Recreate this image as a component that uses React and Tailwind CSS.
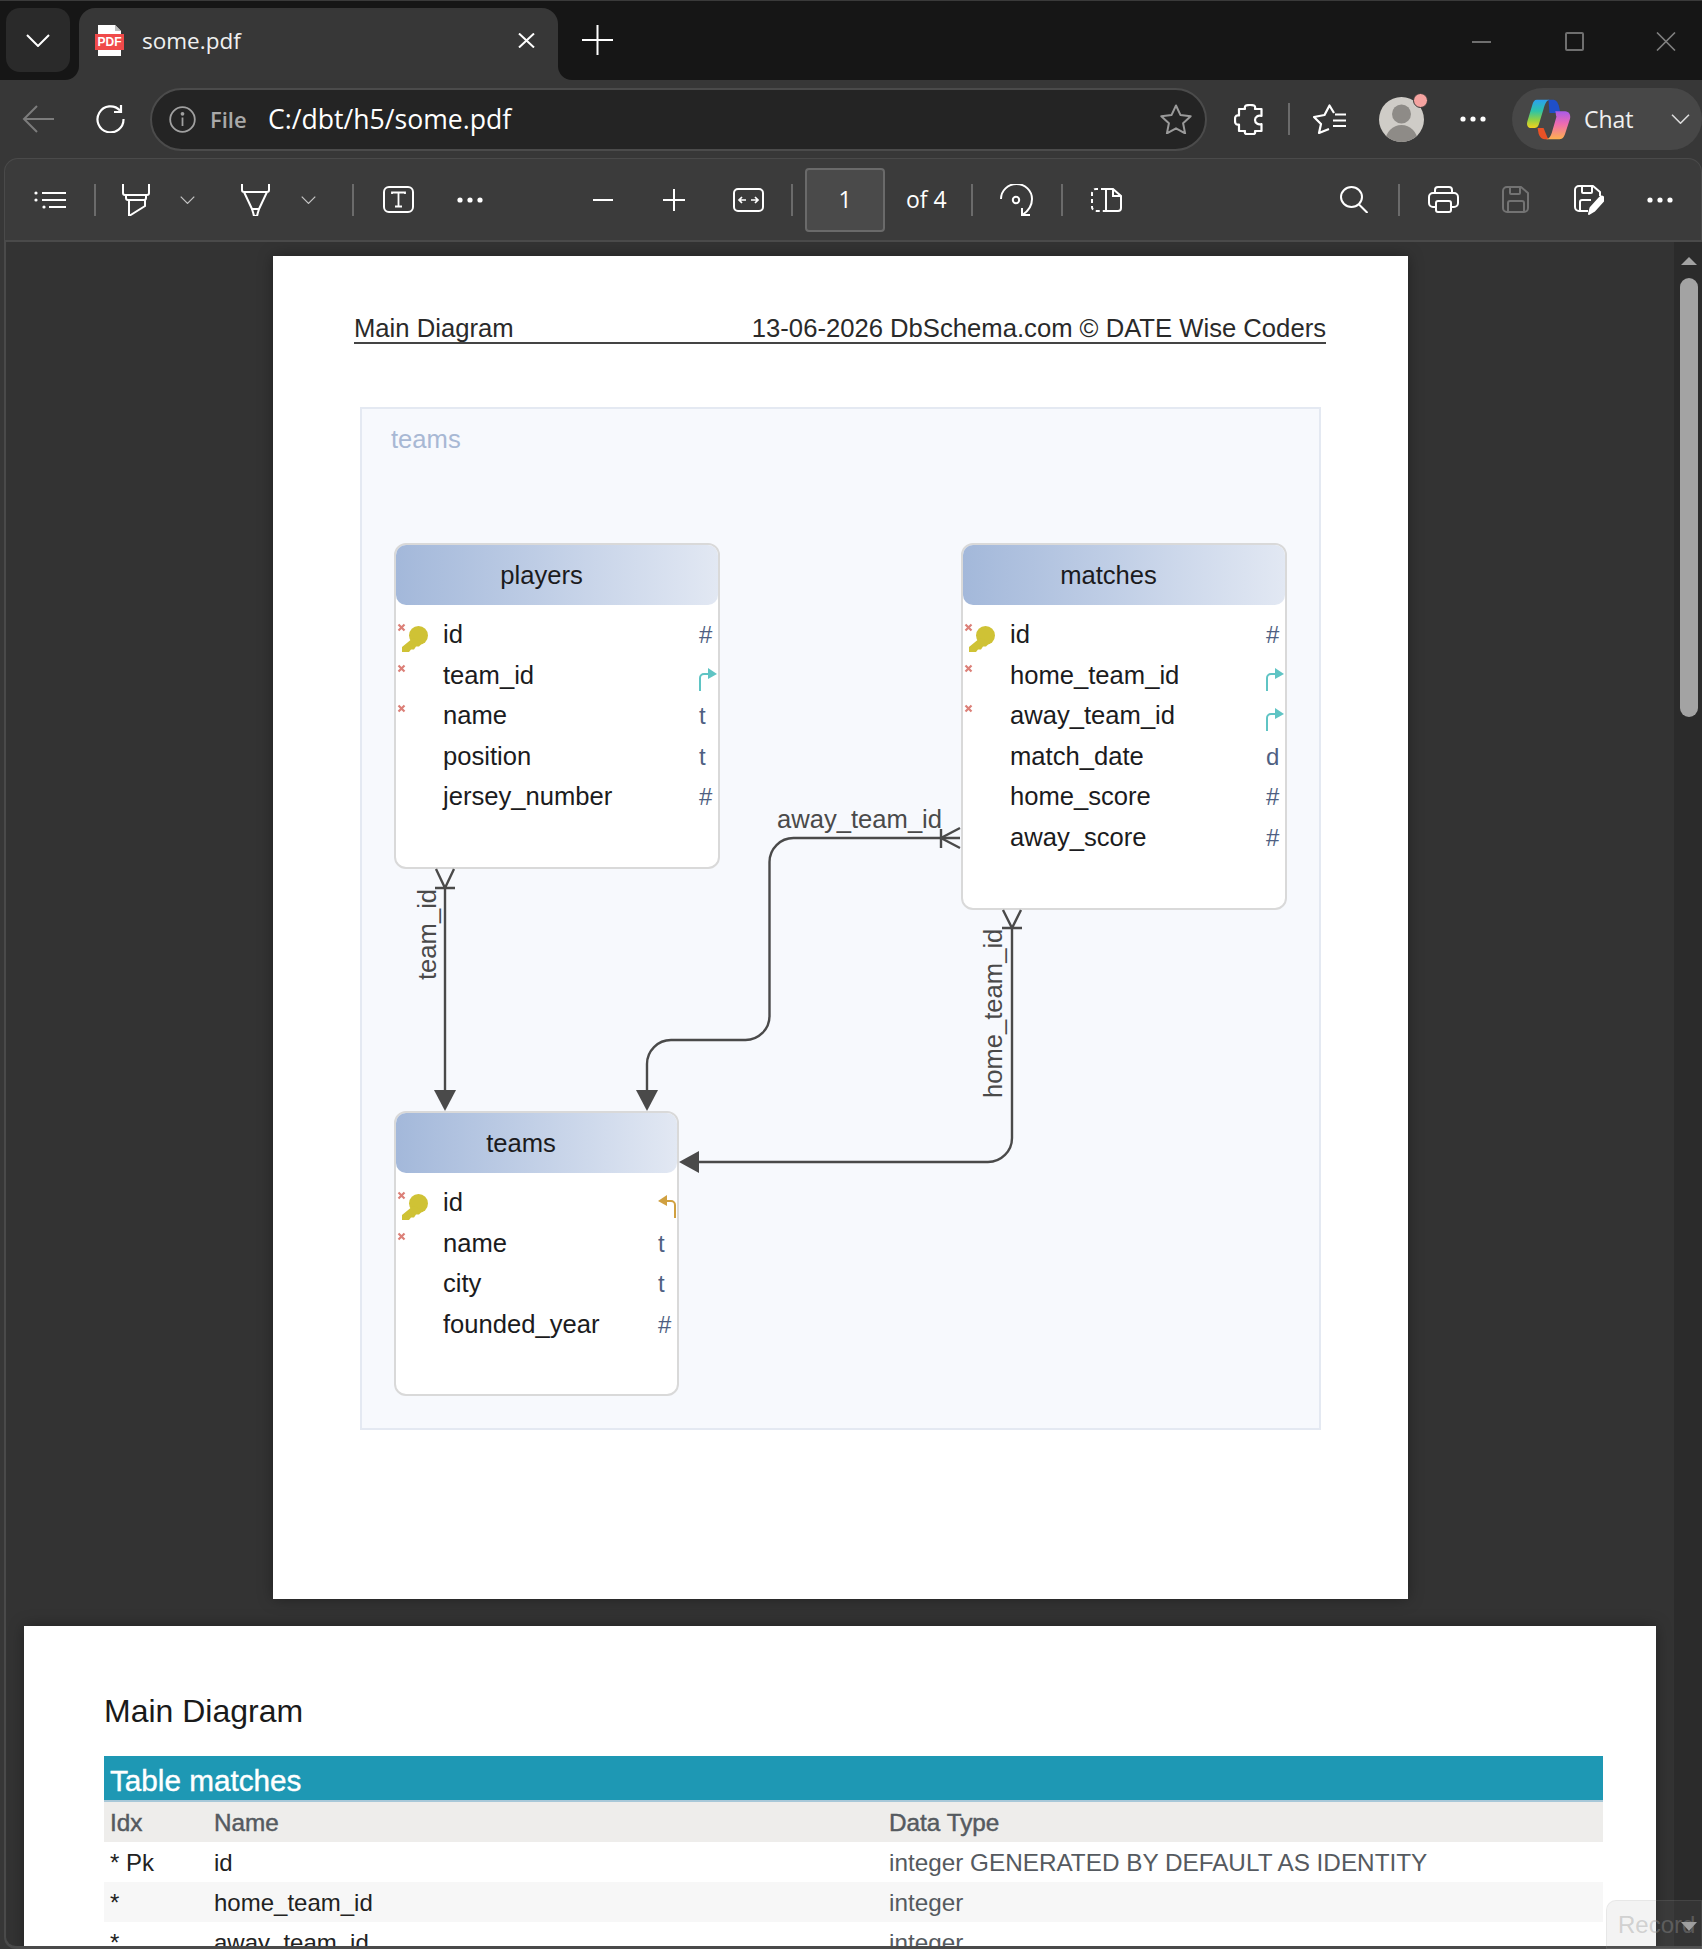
import React from 'react';

// toolbar and browser chrome glyphs, sized in real pixels
const Chevron = ({ className }) => (
  <svg viewBox="0 0 24 13" className={className} fill="none" stroke="currentColor" strokeWidth="2">
    <path d="M1 1l11 11L23 1" />
  </svg>
);

const Dots = () => (
  <svg viewBox="0 0 26 6" className="h-[6px] w-[26px] text-white" fill="currentColor">
    <circle cx="3" cy="3" r="2.6" />
    <circle cx="13" cy="3" r="2.6" />
    <circle cx="23" cy="3" r="2.6" />
  </svg>
);

const Divider = ({ className = 'h-[32px] bg-[#6b6b6b]' }) => <div className={`w-[2px] shrink-0 ${className}`} />;

const PdfFileIcon = () => (
  <div className="relative h-[31px] w-[29px] shrink-0">
    <svg viewBox="0 0 29 31" className="absolute inset-0 h-full w-full">
      <path d="M3 0H20L26 6V31H3Z" fill="#fff" />
      <path d="M20 0V6H26" fill="#bbb" />
      <rect x="0" y="9" width="29" height="16" fill="#f04a4a" />
    </svg>
    <span className="absolute left-0 top-[9px] w-full text-center font-['Liberation_Sans',sans-serif] text-[12px] font-bold leading-[16px] text-white">PDF</span>
  </div>
);

const CopilotIcon = () => (
  <svg viewBox="35 25 140 130" className="h-[43px] w-[47px] shrink-0">
    <defs>
      <linearGradient id="copilotLeft" x1="0" y1="0" x2="0" y2="1">
        <stop offset="0" stopColor="#2b9ff2" />
        <stop offset="0.4" stopColor="#2dc4a8" />
        <stop offset="0.7" stopColor="#8fd046" />
        <stop offset="1" stopColor="#f5d21e" />
      </linearGradient>
      <linearGradient id="copilotRight" x1="0" y1="0" x2="0" y2="1">
        <stop offset="0" stopColor="#a95be8" />
        <stop offset="0.45" stopColor="#ee6bb0" />
        <stop offset="1" stopColor="#ffb14d" />
      </linearGradient>
    </defs>
    <path d="M105 30H118C128 30 133 38 136 48L141 70H108Z" fill="#1f4fc9" />
    <path d="M72 116H90L104 150H98C84 150 78 142 75 132Z" fill="#ea5226" />
    <path d="M70 30H108C98 32 94 44 90 58L76 104C73 114 66 116 58 116H52C42 116 38 106 41 96L56 46C59 36 62 30 70 30Z" fill="url(#copilotLeft)" />
    <path d="M125 65H155C167 65 173 76 170 88L155 134C151 146 145 150 135 150H98C108 148 112 140 115 130L129 82C126 74 128 68 125 65Z" fill="url(#copilotRight)" />
  </svg>
);

function TabStrip() {
  return (
    <div className="flex h-[80px] shrink-0 border-t border-[#3a3a3a] bg-[#373737]">
      <div className="w-[79px] rounded-br-[14px] bg-[#161616] pl-[6px] pt-[7px]">
        <div className="flex h-[64px] w-[64px] items-center justify-center rounded-[14px] bg-[#2a2a2a] text-white">
          <Chevron className="h-[13px] w-[24px]" />
        </div>
      </div>
      <div className="w-[479px] bg-[#161616] pt-[7px]">
        <div className="flex h-full items-center rounded-t-[16px] bg-[#373737] pb-[8px] pl-[16px] pr-[23px]">
          <PdfFileIcon />
          <span className="ml-[18px] pt-[2px] font-['Open_Sans',sans-serif] text-[22.5px] text-[#f0f0f0]">some.pdf</span>
          <svg viewBox="0 0 17 15" className="ml-auto h-[15px] w-[17px] text-white" fill="none" stroke="currentColor" strokeWidth="2">
            <path d="M1 0.5l15 14M16 0.5l-15 14" />
          </svg>
        </div>
      </div>
      <div className="flex flex-1 items-start rounded-bl-[14px] bg-[#161616] pl-[24px]">
        <svg viewBox="0 0 31 30" className="mt-[24px] h-[30px] w-[31px] text-white" fill="none" stroke="currentColor" strokeWidth="2">
          <path d="M15.5 0V30M0 15H31" />
        </svg>
        <div className="ml-auto mr-[26px] mt-[31px] flex items-center text-[#808080]">
          <div className="h-[2px] w-[19px] bg-[#6f6f6f]" />
          <div className="ml-[74px] h-[19px] w-[19px] rounded-[2px] border-2 border-[#6f6f6f]" />
          <svg viewBox="0 0 20 19" className="ml-[72px] h-[19px] w-[20px]" fill="none" stroke="currentColor" strokeWidth="1.6">
            <path d="M1 0.5l18 18M19 0.5l-18 18" />
          </svg>
        </div>
      </div>
    </div>
  );
}

function NavBar() {
  return (
    <div className="flex h-[78px] shrink-0 items-center bg-[#373737] pl-[22px]">
      <svg viewBox="0 0 32 28" className="h-[28px] w-[32px] shrink-0 text-[#7c7c7c]" fill="none" stroke="currentColor" strokeWidth="2">
        <path d="M32 14H2M15 1L2 14l13 13" />
      </svg>
      <svg viewBox="0 0 30 28" className="ml-[41px] h-[28px] w-[30px] shrink-0 text-white" fill="none" stroke="currentColor" strokeWidth="2.2">
        <path d="M25 5.5A13 13 0 1 0 28.5 14M26 0V7H19" />
      </svg>
      <div className="ml-[25px] flex h-[63px] w-[1057px] shrink-0 items-center rounded-full border-2 border-[#4b4b4b] bg-[#242424] pl-[17px] pr-[13px]">
        <svg viewBox="0 0 27 27" className="h-[27px] w-[27px] shrink-0 text-[#a0a0a0]" fill="none" stroke="currentColor" strokeWidth="1.8">
          <circle cx="13.5" cy="13.5" r="12.3" />
          <path d="M13.5 11.5V20" />
          <circle cx="13.5" cy="7.8" r="1" fill="currentColor" />
        </svg>
        <span className="ml-[14px] w-[37px] font-['Open_Sans',sans-serif] text-[22px] font-semibold text-[#a9a9a9]">File</span>
        <span className="ml-[21px] pt-[1px] font-['Open_Sans',sans-serif] text-[26.6px] text-white">C:/dbt/h5/some.pdf</span>
        <svg viewBox="0 0 32 30" className="ml-auto h-[30px] w-[32px] text-[#9a9a9a]" fill="none" stroke="currentColor" strokeWidth="2" strokeLinejoin="round">
          <path d="M16 1.5l4.4 9.4 10.3 1.3-7.6 7 2 10.2L16 24.3l-9.1 5.1 2-10.2-7.6-7 10.3-1.3z" />
        </svg>
      </div>
      <svg viewBox="0 0 29 31" className="ml-[27px] h-[31px] w-[29px] shrink-0 text-white" fill="none" stroke="currentColor" strokeWidth="2.2" strokeLinejoin="round">
        <path d="M5 5H11C10 1 13 1 16 1C19 1 22 1 21 5H27.5V12C24 11 21 13 21 16C21 19 24 21 27.5 20V27H21C22 31 19 30 16 30C13 30 10 31 11 27H5V20.5C1 21.5 1 18 1 16C1 14 1 10.5 5 11.5Z" />
      </svg>
      <Divider className="ml-[25px] h-[32px] bg-[#6b6b6b]" />
      <svg viewBox="0 0 33 30" className="ml-[23px] h-[30px] w-[33px] shrink-0 text-white" fill="none" stroke="currentColor" strokeWidth="2.2" strokeLinejoin="round">
        <path d="M21 9L16.5 1.5 11.5 11 1 13l7 7-2 9 10-4" />
        <path d="M22 10.5H33M20 16.5H33M20 22H33" />
      </svg>
      <div className="relative ml-[33px] h-[45px] w-[45px] shrink-0 overflow-visible">
        <svg viewBox="0 0 45 45" className="h-full w-full">
          <clipPath id="avatarClip">
            <circle cx="22.5" cy="22.5" r="22.5" />
          </clipPath>
          <circle cx="22.5" cy="22.5" r="22.5" fill="#cfccc7" />
          <ellipse cx="22.5" cy="17" rx="9.5" ry="9.5" fill="#8e8b87" />
          <ellipse cx="22.5" cy="44" rx="16" ry="16" fill="#8e8b87" clipPath="url(#avatarClip)" />
        </svg>
        <div className="absolute right-[-4px] top-[-4px] h-[15px] w-[15px] rounded-full border border-[#373737] bg-[#f5a3a0]" />
      </div>
      <div className="ml-[36px] shrink-0">
        <Dots />
      </div>
      <div className="ml-[26px] flex h-[62px] w-[190px] shrink-0 items-center rounded-full bg-[#474747] pl-[13px]">
        <CopilotIcon />
        <span className="ml-[12px] font-['Open_Sans',sans-serif] text-[23px] text-[#f0f0f0]">Chat</span>
        <Chevron className="ml-auto mr-[12px] h-[10px] w-[19px] text-[#ddd]" />
      </div>
    </div>
  );
}

function PdfToolbar() {
  const small = 'h-[8px] w-[15px] text-[#c4c4c4]';
  return (
    <div className="ml-[4px] flex h-[84px] shrink-0 items-center rounded-t-[14px] border-x border-b-2 border-t border-[#4a4a4a] bg-[#3b3b3b] pl-[29px] text-white">
      <svg viewBox="0 0 32 18" className="h-[18px] w-[32px] shrink-0" fill="none" stroke="currentColor" strokeWidth="2">
        <path d="M8 2H32M8 9H32M15 16H32" />
        <circle cx="2" cy="2" r="1.6" fill="currentColor" stroke="none" />
        <circle cx="2" cy="9" r="1.6" fill="currentColor" stroke="none" />
        <circle cx="10" cy="16" r="1.6" fill="currentColor" stroke="none" />
      </svg>
      <Divider className="ml-[28px] h-[32px] bg-[#6b6b6b]" />
      <svg viewBox="0 0 28 32" className="ml-[26px] h-[32px] w-[28px] shrink-0" fill="none" stroke="currentColor" strokeWidth="2">
        <path d="M1 0V9a2 2 0 0 0 2 2H25a2 2 0 0 0 2-2V0M4 11v3a2 2 0 0 0 2 2h16a2 2 0 0 0 2-2v-3M7 16V32L23 22V16" />
      </svg>
      <Chevron className={`ml-[30px] ${small}`} />
      <svg viewBox="0 0 29 32" className="ml-[46px] h-[32px] w-[29px] shrink-0" fill="none" stroke="currentColor" strokeWidth="2">
        <path d="M1 0V6a2 2 0 0 0 2 2H26a2 2 0 0 0 2-2V0M3 8L11 25M26 8L18 25M11 25h7M11 25l1.5 5a2 2 0 0 0 4 0l1.5-5" />
      </svg>
      <Chevron className={`ml-[31px] ${small}`} />
      <Divider className="ml-[36px] h-[32px] bg-[#6b6b6b]" />
      <svg viewBox="0 0 31 27" className="ml-[29px] h-[27px] w-[31px] shrink-0" fill="none" stroke="currentColor" strokeWidth="2">
        <rect x="1" y="1" width="29" height="25" rx="5" />
        <path d="M9 8V6.5H22V8M15.5 6.5V20.5M12 20.5H19" strokeWidth="1.8" />
      </svg>
      <div className="ml-[43px] shrink-0">
        <Dots />
      </div>
      <div className="ml-[110px] h-[2px] w-[20px] shrink-0 bg-white" />
      <svg viewBox="0 0 22 22" className="ml-[50px] h-[22px] w-[22px] shrink-0" fill="none" stroke="currentColor" strokeWidth="2">
        <path d="M11 0V22M0 11H22" />
      </svg>
      <svg viewBox="0 0 31 24" className="ml-[48px] h-[24px] w-[31px] shrink-0" fill="none" stroke="currentColor" strokeWidth="2">
        <rect x="1" y="1" width="29" height="22" rx="4" />
        <path d="M6 12H13M18 12H25M9 9l-3 3 3 3M22 9l3 3-3 3" strokeWidth="1.7" />
      </svg>
      <Divider className="ml-[27px] h-[32px] bg-[#6b6b6b]" />
      <div className="ml-[12px] flex h-[64px] w-[80px] shrink-0 items-center justify-center rounded-[4px] border-2 border-[#6a6a6a] bg-[#4a4a4a] font-['Open_Sans',sans-serif] text-[23px] text-white">1</div>
      <span className="ml-[21px] w-[41px] shrink-0 whitespace-nowrap font-['Open_Sans',sans-serif] text-[23px] text-white">of 4</span>
      <Divider className="ml-[24px] h-[32px] bg-[#6b6b6b]" />
      <svg viewBox="0 0 33 32" className="ml-[27px] h-[32px] w-[33px] shrink-0" fill="none" stroke="currentColor" strokeWidth="2">
        <path d="M1 15A15.5 15 0 0 1 32 15C32 22 28 27 23 30.5" />
        <path d="M22 24V31H30" />
        <circle cx="16" cy="16" r="3.2" />
      </svg>
      <Divider className="ml-[28px] h-[32px] bg-[#6b6b6b]" />
      <svg viewBox="0 0 31 24" className="ml-[28px] h-[24px] w-[31px] shrink-0" fill="none" stroke="currentColor" strokeWidth="2">
        <path d="M14 1H5a4 4 0 0 0-4 4V19a4 4 0 0 0 4 4H14" strokeDasharray="4 3" />
        <path d="M15 1H22L30 8V20a3 3 0 0 1-3 3H15ZM22 1V8H30" />
      </svg>
      <svg viewBox="0 0 28 27" className="ml-[218px] h-[27px] w-[28px] shrink-0" fill="none" stroke="currentColor" strokeWidth="2">
        <ellipse cx="11.5" cy="11" rx="10.5" ry="10" />
        <path d="M19 18.5L27.5 27" />
      </svg>
      <Divider className="ml-[30px] h-[32px] bg-[#6b6b6b]" />
      <svg viewBox="0 0 31 27" className="ml-[28px] h-[27px] w-[31px] shrink-0" fill="none" stroke="currentColor" strokeWidth="2" strokeLinejoin="round">
        <path d="M7 7V4a3 3 0 0 1 3-3H21a3 3 0 0 1 3 3V7" />
        <path d="M8 21H5a4 4 0 0 1-4-4V11a4 4 0 0 1 4-4H26a4 4 0 0 1 4 4V17a4 4 0 0 1-4 4H23" />
        <rect x="8" y="15" width="15" height="11" rx="2" />
      </svg>
      <svg viewBox="0 0 27 27" className="ml-[43px] h-[27px] w-[27px] shrink-0 text-[#737373]" fill="none" stroke="currentColor" strokeWidth="2" strokeLinejoin="round">
        <path d="M5 1H19L26 7V22a4 4 0 0 1-4 4H5a4 4 0 0 1-4-4V5a4 4 0 0 1 4-4Z" />
        <path d="M8 1V7a1 1 0 0 0 1 1H17a1 1 0 0 0 1-1V1M6 26V17a2 2 0 0 1 2-2H20a2 2 0 0 1 2 2V26" />
      </svg>
      <svg viewBox="0 0 30 30" className="ml-[45px] h-[30px] w-[30px] shrink-0" fill="none" stroke="currentColor" strokeWidth="2" strokeLinejoin="round">
        <path d="M14 26H5a4 4 0 0 1-4-4V5a4 4 0 0 1 4-4H19L26 7V11" />
        <path d="M8 1V7a1 1 0 0 0 1 1H17a1 1 0 0 0 1-1V1M6 26V17a2 2 0 0 1 2-2H17" />
        <path d="M15 29l1.5-6L26 12.5a2.3 2.3 0 0 1 3.5 3L20 26Z" fill="currentColor" />
      </svg>
      <div className="ml-[43px] shrink-0">
        <Dots />
      </div>
    </div>
  );
}

const KeyIcon = () => (
  <svg viewBox="0 0 26 26" className="absolute left-[6px] top-[-8px] h-[26px] w-[26px]" fill="#cfc235">
    <circle cx="16.5" cy="9.5" r="9.5" />
    <path d="M11 12L0 21V26H7L9 23.5h3l2-3h3l4-4Z" />
  </svg>
);

const RefOutIcon = () => (
  <svg viewBox="0 0 18 23" className="mt-[7px] h-[23px] w-[18px]" fill="#5fc4c4">
    <path d="M1 23V10a4 4 0 0 1 4-4H10" fill="none" stroke="#5fc4c4" strokeWidth="2" />
    <path d="M9 0L18 6L9 11Z" />
  </svg>
);

const RefInIcon = () => (
  <svg viewBox="0 0 18 23" className="mt-[7px] h-[23px] w-[18px]" fill="#d0a040">
    <path d="M17 23V10a4 4 0 0 0-4-4H8" fill="none" stroke="#d0a040" strokeWidth="2" />
    <path d="M9 0L0 6L9 11Z" />
  </svg>
);

function TableRow({ name, type, required, pk }) {
  return (
    <div className="relative flex h-[40.5px] items-center pl-[47px]">
      {required && <span className="absolute left-[1px] top-[9px] h-[9px] w-[9px]"><svg viewBox="0 0 9 9" className="h-full w-full" stroke="#dc8078" strokeWidth="2.2"><path d="M1.5 1.5l6 6M7.5 1.5l-6 6" /></svg></span>}
      {pk && <span className="absolute left-0 top-[20px]"><KeyIcon /></span>}
      <span className="flex-1 pt-[2px] text-[25.6px] leading-none text-[#1b1b20]">{name}</span>
      <span className="flex h-full w-[19px] shrink-0 items-center pt-[2px] text-[24px] leading-none text-[#4f5f82]">
        {type === 'fk' ? <RefOutIcon /> : type === 'ref' ? <RefInIcon /> : type}
      </span>
    </div>
  );
}

function DiagramTable({ title, rows, className }) {
  return (
    <div className={`absolute rounded-[12px] border-2 border-[#d9d9d9] bg-white ${className}`}>
      <div className="flex h-[60px] items-center justify-center rounded-[10px] bg-linear-to-r from-[#a3b8da] to-[#e2e8f3] pr-[31px] text-[25.6px] text-[#1b1b20]">{title}</div>
      <div className="pt-[9px]">
        {rows.map((row) => (
          <TableRow key={row.name} {...row} />
        ))}
      </div>
    </div>
  );
}

const playerRows = [
  { name: 'id', type: '#', required: true, pk: true },
  { name: 'team_id', type: 'fk', required: true },
  { name: 'name', type: 't', required: true },
  { name: 'position', type: 't' },
  { name: 'jersey_number', type: '#' },
];

const matchRows = [
  { name: 'id', type: '#', required: true, pk: true },
  { name: 'home_team_id', type: 'fk', required: true },
  { name: 'away_team_id', type: 'fk', required: true },
  { name: 'match_date', type: 'd' },
  { name: 'home_score', type: '#' },
  { name: 'away_score', type: '#' },
];

const teamRows = [
  { name: 'id', type: 'ref', required: true, pk: true },
  { name: 'name', type: 't', required: true },
  { name: 'city', type: 't' },
  { name: 'founded_year', type: '#' },
];

function Diagram() {
  return (
    <div className="relative ml-[87px] mt-[63px] h-[1023px] w-[961px] border-2 border-[#e4e9f2] bg-[#f7f9fd]">
      <span className="absolute left-[29px] top-[15px] text-[25.6px] leading-[30px] text-[#a8b8d4]">teams</span>
      <DiagramTable title="players" rows={playerRows} className="left-[32px] top-[134px] h-[326px] w-[326px]" />
      <DiagramTable title="matches" rows={matchRows} className="left-[599px] top-[134px] h-[367px] w-[326px]" />
      <DiagramTable title="teams" rows={teamRows} className="left-[32px] top-[702px] h-[285px] w-[285px]" />
      <svg viewBox="362 409 957 1019" className="absolute inset-0 h-full w-full" fill="none" stroke="#4a4a4a" strokeWidth="2.4">
        <path d="M445 888V1092" />
        <path d="M436 869L445 888L454 869M435 888H455" />
        <path d="M434 1090H456L445 1111Z" fill="#4a4a4a" stroke="none" />
        <path d="M960 838H793.5A24 24 0 0 0 769.5 862V1016A24 24 0 0 1 745.5 1040H671A24 24 0 0 0 647 1064V1092" />
        <path d="M941 829V848M960 828L941 838L960 848" />
        <path d="M636 1090H658L647 1111Z" fill="#4a4a4a" stroke="none" />
        <path d="M1012 928V1138A24 24 0 0 1 988 1162H697" />
        <path d="M1003 910L1012 928L1021 910M1002 928H1022" />
        <path d="M699 1151V1173L679 1162Z" fill="#4a4a4a" stroke="none" />
      </svg>
      <span className="absolute left-[415px] top-[395px] text-[25.6px] leading-[30px] text-[#4a4a4a]">away_team_id</span>
      <span className="absolute left-[49.5px] top-[571px] w-[0px] whitespace-nowrap text-[25.6px] leading-[30px] text-[#4a4a4a] [transform-origin:0_0] rotate-[-90deg]">
        team_id
      </span>
      <span className="absolute left-[616px] top-[689px] w-[0px] whitespace-nowrap text-[25.6px] leading-[30px] text-[#4a4a4a] [transform-origin:0_0] rotate-[-90deg]">
        home_team_id
      </span>
    </div>
  );
}

function DiagramPage() {
  return (
    <div className="ml-[267px] h-[1343px] w-[1135px] shrink-0 bg-white pt-[58px] shadow-[0_0_14px_rgba(0,0,0,0.35)]">
      <div className="ml-[81px] flex w-[972px] justify-between border-b-2 border-[#444] text-[25.65px] leading-[28px] text-[#2a2a2a]">
        <span>Main Diagram</span>
        <span>13-06-2026 DbSchema.com © DATE Wise Coders</span>
      </div>
      <Diagram />
    </div>
  );
}

const columnRows = [
  { idx: '* Pk', name: 'id', type: 'integer GENERATED BY DEFAULT AS IDENTITY', bg: 'bg-white' },
  { idx: '*', name: 'home_team_id', type: 'integer', bg: 'bg-[#f7f7f7]' },
  { idx: '*', name: 'away_team_id', type: 'integer', bg: 'bg-white' },
];

function TablePage() {
  return (
    <div className="ml-[18px] mt-[27px] w-[1632px] shrink-0 bg-white pb-[40px] pl-[80px] pt-[65px] shadow-[0_0_14px_rgba(0,0,0,0.35)]">
      <h1 className="text-[32px] leading-[40px] text-[#1a1a1a]">Main Diagram</h1>
      <div className="mt-[25px] w-[1499px]">
        <div className="flex h-[46px] items-center border-b-2 border-[#a8c8d8] bg-[#1e98b4] pl-[6px] pt-[6px] text-[29.7px] text-white [-webkit-text-stroke:0.4px_white]">Table matches</div>
        <div className="grid h-[40px] grid-cols-[104px_675px_1fr] items-center bg-[#eeedeb] pl-[6px] pt-[2px] text-[24.3px] text-[#555a60] [-webkit-text-stroke:0.45px_#555a60]">
          <span>Idx</span>
          <span>Name</span>
          <span>Data Type</span>
        </div>
        {columnRows.map((row) => (
          <div key={row.name} className={`grid h-[40px] grid-cols-[104px_675px_1fr] items-center pl-[6px] pt-[2px] text-[24px] ${row.bg}`}>
            <span className="text-[#222]">{row.idx}</span>
            <span className="text-[#222]">{row.name}</span>
            <span className="text-[24.3px] text-[#555a60]">{row.type}</span>
          </div>
        ))}
      </div>
    </div>
  );
}

function Scrollbar() {
  return (
    <div className="flex w-[28px] shrink-0 flex-col items-center bg-[#2b2b2b] pl-[2px]">
      <svg viewBox="0 0 16 8" className="mt-[15px] h-[8px] w-[16px] shrink-0" fill="#a3a3a3">
        <path d="M8 0L16 8H0Z" />
      </svg>
      <div className="mt-[13px] h-[439px] w-[18px] shrink-0 rounded-full bg-[#a3a3a3]" />
      <svg viewBox="0 0 16 9" className="mb-[15px] mt-auto h-[9px] w-[16px] shrink-0" fill="#a3a3a3">
        <path d="M0 0H16L8 9Z" />
      </svg>
    </div>
  );
}

export default function App() {
  return (
    <div className="relative flex h-[1949px] w-[1702px] flex-col overflow-hidden bg-[#373737] font-['Liberation_Sans',Arial,sans-serif]">
      <TabStrip />
      <NavBar />
      <PdfToolbar />
      <div className="ml-[4px] flex min-h-0 flex-1 overflow-hidden rounded-bl-[12px] border-b-[3px] border-l-2 border-[#4a4a4a] bg-[#333333]">
        <div className="flex min-w-0 flex-1 flex-col overflow-hidden pt-[14px]">
          <DiagramPage />
          <TablePage />
        </div>
        <Scrollbar />
      </div>
      <div className="absolute left-[1606px] top-[1900px] flex h-[49px] w-[96px] items-center rounded-tl-[10px] border border-[#aaa]/15 bg-[#888]/10 pl-[11px] text-[24px] text-[#999]/40">Record</div>
    </div>
  );
}
